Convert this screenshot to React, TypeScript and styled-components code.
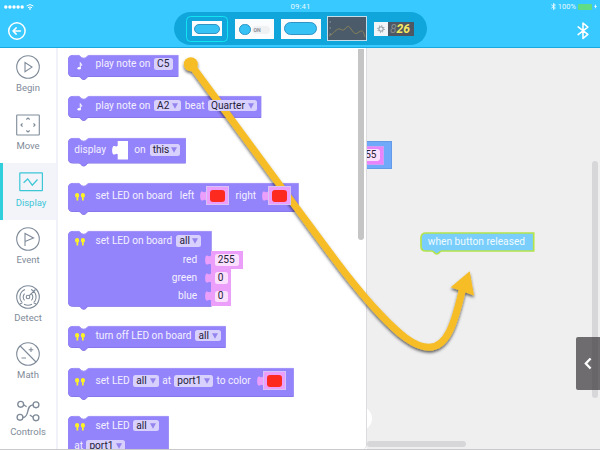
import React from "react";
import styled, { createGlobalStyle } from "styled-components";

const GlobalStyle = createGlobalStyle`
  * { box-sizing: border-box; }
  body { margin: 0; overflow: hidden; font-family: Roboto, "Liberation Sans", sans-serif; }
  svg { display: block; flex: none; overflow: visible; }
`;

const Screen = styled.div`
  position: relative;
  width: 600px;
  height: 450px;
  overflow: hidden;
  display: flex;
  flex-direction: column;
  background: #fff;
`;

/* Header */

const Header = styled.header`
  height: 48px;
  flex: none;
  display: flex;
  flex-direction: column;
  background: #37c9ff;
  border-bottom: 1px solid #19a9df;
`;

const StatusBar = styled.div`
  height: 12px;
  display: grid;
  grid-template-columns: 1fr 60px 1fr;
  align-items: center;
  padding: 1px 3px 0 4px;
  color: #e9f9ff;
  font-size: 7.5px;
  line-height: 11px;
`;

const StatusGroup = styled.div<{ $end?: boolean }>`
  display: flex;
  align-items: center;
  gap: 2px;
  justify-content: ${(p) => (p.$end ? "flex-end" : "flex-start")};
`;

const Clock = styled.div`
  text-align: center;
  font-size: 7.8px;
  letter-spacing: 0.15px;
`;

const Battery = styled.div`
  width: 14px;
  height: 6px;
  border-radius: 1px;
  background: #5fdc84;
`;

const ToolBar = styled.div`
  flex: 1;
  display: flex;
  align-items: flex-start;
  justify-content: space-between;
  padding: 0 8px 0 8px;
`;

const BarButton = styled.div`
  width: 18px;
  height: 36px;
  display: flex;
  align-items: center;
  justify-content: center;
  padding-top: 2px;
`;

const WidgetStrip = styled.div`
  width: 253px;
  height: 33px;
  margin-left: 1px;
  border-radius: 17px;
  background: #10a6dc;
  display: flex;
  align-items: center;
  padding: 0 13px 0 12px;
  justify-content: space-between;
`;

const SelectedFrame = styled.div`
  width: 42px;
  height: 26px;
  border: 1.5px solid #13e4f2;
  border-radius: 4.5px;
  display: flex;
  align-items: center;
  justify-content: center;
`;

const Tile = styled.div<{ $w: number; $h: number }>`
  width: ${(p) => p.$w}px;
  height: ${(p) => p.$h}px;
  background: #fafcfd;
  display: flex;
  align-items: center;
  justify-content: center;
`;

const Capsule = styled.div<{ $w: number; $h: number }>`
  width: ${(p) => p.$w}px;
  height: ${(p) => p.$h}px;
  border-radius: 8px;
  background: #37c2f6;
  border: 1px solid #3193c4;
`;

const Knob = styled.div`
  width: 11.5px;
  height: 11.5px;
  margin-top: 2px;
  border-radius: 50%;
  background: #37c2f6;
  border: 1px solid #2c93c6;
`;

const OnLabel = styled.div`
  width: 18px;
  height: 8px;
  margin: 2px 0 0 1px;
  border-radius: 4px;
  background: #f0f1f3;
  color: #8b9098;
  font-size: 5.2px;
  font-weight: 700;
  line-height: 8.5px;
  padding-left: 2px;
`;

const GraphTile = styled.div`
  width: 40px;
  height: 25px;
  background: #4c5b69;
  border: 1px solid #c5dde8;
`;

const DigitTile = styled.div`
  display: flex;
  width: 40px;
  height: 14px;
`;

const Sun = styled.div`
  width: 14px;
  height: 14px;
  background: #f1f5f8;
  display: flex;
  align-items: center;
  justify-content: center;
`;

const Digits = styled.div`
  width: 26px;
  height: 14px;
  background: #4f5862;
  color: #f7ea63;
  font: italic 700 12px/14px Roboto, sans-serif;
  display: flex;
  padding-left: 2px;
`;

const GhostDigit = styled.span`
  color: #858b91;
  font-weight: 400;
`;

/* Main layout */

const Body = styled.div`
  flex: 1;
  min-height: 0;
  display: flex;
  border-bottom: 1px solid #c9c8ca;
`;

const Sidebar = styled.nav`
  width: 58px;
  flex: none;
  padding-top: 0.4px;
  border-right: 2px solid #f1f1f9;
  display: flex;
  flex-direction: column;
`;

const NavItem = styled.div<{ $active?: boolean }>`
  height: 57.3px;
  flex: none;
  display: flex;
  flex-direction: column;
  align-items: center;
  padding: 6px 0 0 ${(p) => (p.$active ? 3 : 0)}px;
  border-left: ${(p) => (p.$active ? 3 : 0)}px solid #30cfdb;
  background: ${(p) => (p.$active ? "#f3f3fa" : "#fff")};
  color: ${(p) => (p.$active ? "#3bc7d6" : "#7f8b99")};
`;

const NavIcon = styled.div`
  width: 26px;
  height: 26px;
  display: flex;
  align-items: center;
  justify-content: center;
`;

const NavLabel = styled.div`
  margin-top: 2px;
  font-size: 9.5px;
  line-height: 12px;
`;

const Palette = styled.section`
  width: 309px;
  flex: none;
  display: flex;
  overflow: hidden;
  background: #fff;
  border-right: 1px solid #dcdbe0;
  border-bottom-right-radius: 4px;
`;

const BlockList = styled.div`
  width: 300px;
  flex: none;
  padding: 6.6px 0 0 9.5px;
  display: flex;
  flex-direction: column;
`;

const PaletteScroll = styled.div`
  width: 6px;
  height: 191px;
  margin-top: 1px;
  border-radius: 0 0 3px 3px;
  background: #c5c5c6;
`;

/* Blocks */

const BlockFrame = styled.div<{ $w: number; $h: number; $gap: number }>`
  display: grid;
  flex: none;
  grid-template: ${(p) => p.$h}px / ${(p) => p.$w}px;
  margin-bottom: ${(p) => p.$gap}px;
  > * { grid-area: 1 / 1; }
`;

const BlockRows = styled.div`
  z-index: 1;
  display: flex;
  flex-direction: column;
`;

const Row = styled.div<{ $h: number }>`
  height: ${(p) => p.$h}px;
  flex: none;
  display: flex;
  align-items: center;
  padding-left: 6.8px;
`;

const Word = styled.span<{ $w: number; $ml?: number; $right?: boolean }>`
  width: ${(p) => p.$w}px;
  margin-left: ${(p) => p.$ml ?? 0}px;
  flex: none;
  display: flex;
  justify-content: ${(p) => (p.$right ? "flex-end" : "flex-start")};
  white-space: nowrap;
  color: #f3f0ff;
  font-size: 10.15px;
  line-height: 12px;
`;

const Pill = styled.span<{ $w: number; $ml?: number; $pink?: boolean }>`
  width: ${(p) => p.$w}px;
  height: 11.6px;
  margin-left: ${(p) => p.$ml ?? 0}px;
  flex: none;
  display: flex;
  align-items: center;
  justify-content: space-between;
  padding: 0 3.1px;
  border-radius: 2.5px;
  background: ${(p) => (p.$pink ? "#fae0fd" : "#d8d0fd")};
  color: #252238;
  font-size: 10.15px;
  line-height: 12px;
  white-space: nowrap;
`;

const IconSlot = styled.span`
  width: 12px;
  margin: 3px 9.2px 0 0;
  flex: none;
  display: flex;
  justify-content: center;
`;

const ValueShell = styled.span<{ $ml?: number }>`
  display: flex;
  align-items: center;
  flex: none;
  margin-left: ${(p) => p.$ml ?? 0}px;
`;

const ValueBody = styled.span<{ $w: number; $h: number; $edge?: boolean }>`
  width: ${(p) => p.$w}px;
  height: ${(p) => p.$h}px;
  display: flex;
  align-items: center;
  justify-content: center;
  background: #eb9ffb;
  border: ${(p) => (p.$edge ? "0.8px solid #d6c2f8" : "none")};
`;

const RedChip = styled.span`
  width: 15.5px;
  height: 12px;
  border-radius: 3px;
  background: #fd2a20;
`;

function blockPath(w: number, h: number, notch = true) {
  const top = notch
    ? "M5 0 H10.5 C12.5 0 12.5 3 15.8 3 C19 3 19 0 21 0"
    : "M5 0";
  const bottom = `H20.5 C18.5 ${h} 18.5 ${h + 3} 15.8 ${h + 3} C13 ${h + 3} 13 ${h} 11 ${h} H5`;
  return `${top} H${w} V${h} ${bottom} Q0 ${h} 0 ${h - 5} V5 Q0 0 5 0 Z`;
}

function Block({ w, h, gap, children }: { w: number; h: number; gap: number; children: React.ReactNode }) {
  return (
    <BlockFrame $w={w} $h={h} $gap={gap}>
      <svg width={w} height={h}>
        <path d={blockPath(w, h)} fill="#7a6bdc" transform="translate(0 .5)" />
        <path d={blockPath(w, h)} fill="#9484fb" />
        <path d={`M5 .4 H10.5 C12.5 .4 12.5 3.2 15.8 3.2 C19 3.2 19 .4 21 .4 H${w}`} fill="none" stroke="#a99cf9" strokeWidth=".8" />
      </svg>
      <BlockRows>{children}</BlockRows>
    </BlockFrame>
  );
}

const Caret = () => (
  <svg width="6" height="6" viewBox="0 0 6 6"><path d="M0 .3H6L3 5.8Z" fill="#9484ee" /></svg>
);

function Select({ w, ml, children }: { w: number; ml?: number; children: string }) {
  return <Pill $w={w} $ml={ml}>{children}<Caret /></Pill>;
}

const Note = () => (
  <IconSlot>
    <svg width="6" height="8" viewBox="0 0 6 9">
      <ellipse cx="2" cy="7" rx="1.9" ry="1.5" fill="#fff" />
      <path d="M3.3 7V.7C3.7 2 5.3 2.3 4.9 4.2" fill="none" stroke="#fff" strokeWidth="1.1" />
    </svg>
  </IconSlot>
);

const Leds = () => (
  <IconSlot>
    <svg width="10" height="8" viewBox="0 0 10 8" fill="#fdf223">
      <path d="M0 2.2A2 2 0 0 1 4.2 2.2L3.8 4.2H3.2V7.4H1.5V4.2H.5Z" />
      <path d="M5.8 2.2A2 2 0 0 1 10 2.2L9.6 4.2H8.7V7.4H7V4.2H6.3Z" />
    </svg>
  </IconSlot>
);

const Plug = () => (
  <svg width="5.7" height="18" viewBox="0 0 5.7 18">
    <path d="M6 4.5 C4 6.5 3.5 4 1.5 4.5 C-.3 5 -.3 13 1.5 13.5 C3.5 14 4 11.5 6 13.5Z" fill="#eb9ffb" />
  </svg>
);

const Color = ({ ml }: { ml: number }) => (
  <ValueShell $ml={ml}>
    <Plug />
    <ValueBody $w={23} $h={19} $edge><RedChip /></ValueBody>
  </ValueShell>
);

const NumberInput = ({ w, label, value }: { w: number; label: string; value: string }) => (
  <Row $h={18.2}>
    <Word $w={122.8} $right>{label}</Word>
    <ValueShell $ml={8}>
      <Plug />
      <ValueBody $w={w} $h={18.2}><Pill $pink $w={w - 7.5}>{value}</Pill></ValueBody>
    </ValueShell>
  </Row>
);

/* Canvas */

const Canvas = styled.main`
  position: relative;
  flex: 1;
  overflow: hidden;
  background: #efeff0;
`;

const Placed = styled.div<{ $x: number; $y: number }>`
  position: absolute;
  left: ${(p) => p.$x}px;
  top: ${(p) => p.$y}px;
`;

const HiddenBlock = styled.div`
  width: 24.5px;
  height: 28px;
  background: #70a9fa;
  border: 1px solid #649be9;
  border-left: 0;
  display: flex;
  align-items: center;
`;

const HiddenValue = styled.div`
  width: 17px;
  height: 19px;
  background: #ea84fb;
  border: 1px solid #cf9df4;
  border-left: 0;
  display: flex;
  align-items: center;
`;

const HiddenNumber = styled.div`
  width: 13px;
  height: 12px;
  border-radius: 0 3px 3px 0;
  background: #fae0fc;
  color: #2b2333;
  font-size: 10px;
  line-height: 12px;
  display: flex;
  justify-content: flex-end;
  padding-right: 3.5px;
`;

const Ring = styled.div`
  width: 25px;
  height: 25px;
  border-radius: 50%;
  border: 5px solid #fff;
  background: #ddd;
`;

const Bar = styled.div<{ $w: number; $h: number }>`
  width: ${(p) => p.$w}px;
  height: ${(p) => p.$h}px;
  border-radius: 3px;
  background: #d7d6d9;
`;

const EventLabel = styled.div`
  color: #f0fbff;
  font-size: 10.2px;
  line-height: 12px;
  padding: 4.6px 0 0 7.3px;
  white-space: nowrap;
`;

const Drawer = styled.div`
  width: 24px;
  height: 52.5px;
  border-radius: 2px 0 0 2px;
  background: rgba(70, 68, 70, 0.77);
  display: flex;
  align-items: center;
  justify-content: center;
  padding-right: 1px;
`;

const Overlay = styled.div`
  position: absolute;
  inset: 0;
  pointer-events: none;
`;

const Bluetooth = ({ w, h, s }: { w: number; h: number; s: number }) => (
  <svg width={w} height={h} viewBox="0 0 12 18" fill="none" stroke="#fff" strokeWidth={s} strokeLinejoin="round" strokeLinecap="round">
    <path d="M1 5L11 12.8L6 17V1L11 5.2L1 13" />
  </svg>
);

const navItems = [
  { label: "Begin", icon: <><circle cx="13" cy="13" r="11.3" /><path d="M10 8.5V17.8L17 13.1Z" /></> },
  { label: "Move", icon: <><rect x="1.7" y="3" width="22.6" height="20" rx=".5" /><g strokeWidth="1.2"><path d="M11.3 7.5L13 6L14.7 7.5M11.3 18.5L13 20L14.7 18.5M7.5 11.3L6 13L7.5 14.7M18.5 11.3L20 13L18.5 14.7" /></g></> },
  { label: "Display", icon: <g strokeWidth="1.2"><rect x="1.8" y="3.8" width="22.6" height="17.8" rx=".4" /><path d="M5.6 13.8L9.7 10L14.3 16.2L19.5 10.5" /></g> },
  { label: "Event", icon: <><circle cx="13" cy="13" r="11.3" /><path d="M10 20V7.5L18.5 12L10 15.5" /></> },
  { label: "Detect", icon: <><circle cx="13" cy="13" r="11.3" /><circle cx="13" cy="13" r="1.8" /><path d="M9.6 16.4A4.8 4.8 0 0 1 9.6 9.6M16.4 9.6A4.8 4.8 0 0 1 16.4 16.4M7.3 18.7A8 8 0 0 1 10 5.6M16 5.6A8 8 0 0 1 18.7 18.7M14.3 11.7L20.5 5.5M9 20.2A9 9 0 0 0 17 20.2M5 20L7.3 18.7M21 20L18.7 18.7" /></> },
  { label: "Math", icon: <><circle cx="13" cy="13" r="11.3" /><path d="M5.2 5L21 21M13.7 8.8H18.3M16 6.5V11.1M6.5 17H11" /></> },
  { label: "Controls", icon: <g strokeWidth="1.35"><circle cx="5.7" cy="6.3" r="2.9" /><circle cx="21" cy="6.8" r="2.9" /><circle cx="5" cy="19.3" r="2.9" /><circle cx="21" cy="19.8" r="2.9" /><path d="M8 19.5C15 19.5 10.5 7 18 6.8M8.7 6.8L11.6 8.7M14.8 17L18.2 19.2" /></g> },
];

export default function App() {
  return (
    <Screen>
      <GlobalStyle />
      <Header>
        <StatusBar>
          <StatusGroup>
            <svg width="20" height="4" fill="#fff">
              {[1.8, 5.9, 10, 14.1, 18.2].map((x) => <circle key={x} cx={x} cy="2" r="1.7" />)}
            </svg>
            <svg width="8" height="6" viewBox="0 0 8 6" fill="none" stroke="#fff" strokeWidth="1">
              <path d="M.6 2Q4 -.9 7.4 2M2 3.7Q4 2.1 6 3.7" /><circle cx="4" cy="5" r=".4" fill="#fff" />
            </svg>
          </StatusGroup>
          <Clock>09:41</Clock>
          <StatusGroup $end>
            <Bluetooth w={5} h={7} s={2} />
            <span>100%</span>
            <Battery />
            <svg width="3" height="5" viewBox="0 0 3 5"><path d="M2 0L0 2.8H1.3L.8 5L3 2H1.7Z" fill="#fff" /></svg>
          </StatusGroup>
        </StatusBar>
        <ToolBar>
          <BarButton>
            <svg width="18" height="18" fill="none" stroke="#fff" strokeWidth="1.5" strokeLinecap="round" strokeLinejoin="round">
              <circle cx="8.9" cy="9" r="8.2" /><path d="M12.5 9H5.2M8.2 5.9L5 9L8.2 12.1" />
            </svg>
          </BarButton>
          <WidgetStrip>
            <SelectedFrame><Tile $w={30} $h={15}><Capsule $w={25.5} $h={10} /></Tile></SelectedFrame>
            <Tile $w={39} $h={20}><Knob /><OnLabel>ON</OnLabel></Tile>
            <Tile $w={40} $h={20}><Capsule $w={33} $h={13} /></Tile>
            <GraphTile>
              <svg width="38" height="23" fill="none" stroke="#8d8658" strokeWidth=".9">
                <path d="M1 19C6 17 8 11 12 12C15 13 14 14 17 12C20 8 21 9 23 12C27 18 28 17 31 15C35 12 36 16 37 20" />
                <path d="M1.5 5H3M1.5 11H3M1.5 17H3" stroke="#98a2aa" />
              </svg>
            </GraphTile>
            <DigitTile>
              <Sun>
                <svg width="8" height="8" viewBox="-4 -4 8 8" fill="none" stroke="#727c85">
                  <circle r="2.2" strokeWidth=".8" /><circle r="3.2" strokeWidth="1" strokeDasharray="1 1.51" />
                </svg>
              </Sun>
              <Digits><GhostDigit>8</GhostDigit>26</Digits>
            </DigitTile>
          </WidgetStrip>
          <BarButton><Bluetooth w={12} h={17.5} s={1.6} /></BarButton>
        </ToolBar>
      </Header>

      <Body>
        <Sidebar>
          {navItems.map((item) => (
            <NavItem key={item.label} $active={item.label === "Display"}>
              <NavIcon><svg width="26" height="26" fill="none" stroke="currentColor" strokeWidth="1.1">{item.icon}</svg></NavIcon>
              <NavLabel>{item.label}</NavLabel>
            </NavItem>
          ))}
        </Sidebar>

        <Palette>
          <BlockList>
            <Block w={110.3} h={21.4} gap={20.2}>
              <Row $h={19}><Note /><Word $w={58.5}>play note on</Word><Pill $w={19.3}>C5</Pill></Row>
            </Block>
            <Block w={193.2} h={21.4} gap={20}>
              <Row $h={19}>
                <Note /><Word $w={58.5}>play note on</Word><Select w={27}>A2</Select>
                <Word $w={19.6} $ml={3.7}>beat</Word><Select w={48.7} ml={3.7}>Quarter</Select>
              </Row>
            </Block>
            <Block w={117.7} h={25} gap={20}>
              <Row $h={25}>
                <Word $w={32}>display</Word>
                <ValueShell $ml={6}>
                  <svg width="16" height="18.5" viewBox="0 0 16 18.5"><path d="M5.7 0H16V18.5H5.7V13.3C4 11.5 3.5 14 1.5 13.5C-.3 13 -.3 6 1.5 5C3.5 4.5 4 6.5 5.7 4.8Z" fill="#fff" /></svg>
                </ValueShell>
                <Word $w={11} $ml={6}>on</Word><Select w={30.7} ml={4.3}>this</Select>
              </Row>
            </Block>
            <Block w={230.5} h={28.4} gap={20}>
              <Row $h={26}>
                <Leds /><Word $w={77}>set LED on board</Word><Word $w={14.5} $ml={7.2}>left</Word>
                <Color ml={6} /><Word $w={20} $ml={6.7}>right</Word><Color ml={6.6} />
              </Row>
            </Block>
            <Block w={143.5} h={75.2} gap={20}>
              <Row $h={20}><Leds /><Word $w={77}>set LED on board</Word><Select w={25} ml={4}>all</Select></Row>
              <NumberInput w={32} label="red" value="255" />
              <NumberInput w={20.5} label="green" value="0" />
              <NumberInput w={20.5} label="blue" value="0" />
            </Block>
            <Block w={157.6} h={21.4} gap={20.2}>
              <Row $h={19}><Leds /><Word $w={97}>turn off LED on board</Word><Select w={25.7} ml={3}>all</Select></Row>
            </Block>
            <Block w={225.6} h={28.4} gap={20}>
              <Row $h={26}>
                <Leds /><Word $w={34}>set LED</Word><Select w={25.7} ml={3.7}>all</Select>
                <Word $w={8.7} $ml={3.3}>at</Word><Select w={38.7} ml={3.3}>port1</Select>
                <Word $w={34.4} $ml={3.6}>to color</Word><Color ml={6.4} />
              </Row>
            </Block>
            <Block w={100.6} h={60} gap={0}>
              <Row $h={19}><Leds /><Word $w={34}>set LED</Word><Select w={25.7} ml={3.7}>all</Select></Row>
              <Row $h={22}><Word $w={8.7}>at</Word><Select w={38.7} ml={3.3}>port1</Select></Row>
            </Block>
          </BlockList>
          <PaletteScroll />
        </Palette>

        <Canvas>
          <Placed $x={0} $y={93}>
            <HiddenBlock><HiddenValue><HiddenNumber>55</HiddenNumber></HiddenValue></HiddenBlock>
          </Placed>
          <Placed $x={-20} $y={357.5}><Ring /></Placed>
          <Placed $x={0} $y={393}><Bar $w={99} $h={6} /></Placed>
          <Placed $x={225} $y={113}><Bar $w={6} $h={237} /></Placed>
          <Placed $x={54} $y={184.5}>
            <svg width="113" height="18">
              <path d={blockPath(112.7, 18, false)} fill="#79cefb" stroke="#b4e34b" strokeWidth="1.7" />
            </svg>
          </Placed>
          <Placed $x={53.5} $y={183}><EventLabel>when button released</EventLabel></Placed>
          <Placed $x={209} $y={289}>
            <Drawer>
              <svg width="8" height="11" fill="none" stroke="#fff" strokeWidth="2.3"><path d="M6.6 .5L1.8 5.5L6.6 10.5" /></svg>
            </Drawer>
          </Placed>
        </Canvas>
      </Body>

      <Overlay>
        <svg width="600" height="450">
          <defs>
            <filter id="shade" x="-10%" y="-10%" width="120%" height="120%">
              <feDropShadow dx="0" dy="2" stdDeviation="1.6" floodColor="#000" floodOpacity=".6" />
            </filter>
          </defs>
          <g filter="url(#shade)" fill="#f6bd25">
            <circle cx="190.8" cy="64.3" r="7" />
            <path d="M190.8 64.3L296 207C330 253 352 284 380 314C398 333 414 347.3 429 347.3C447 347.3 454.5 324 462.5 289" fill="none" stroke="#f6bd25" strokeWidth="7" />
            <path d="M469.7 271.3L450.7 287.3L474 295.5Z" />
          </g>
        </svg>
      </Overlay>
    </Screen>
  );
}
